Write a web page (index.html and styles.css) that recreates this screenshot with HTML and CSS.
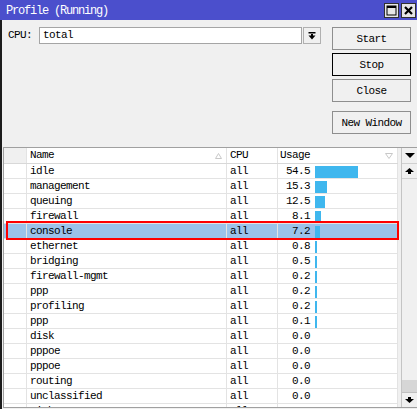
FILE: index.html
```html
<!DOCTYPE html>
<html>
<head>
<meta charset="utf-8">
<link rel="stylesheet" href="styles.css">
</head>
<body>
<div class="window">
  <div class="titlebar">
    <span class="title-text">Profile (Running)</span>
    <span class="tbtn"><svg width="13" height="13" viewBox="0 0 13 13"><rect x="2" y="2" width="9" height="9" fill="none" stroke="#000" stroke-width="1"/><rect x="2" y="2" width="9" height="2" fill="#000"/></svg></span>
    <span class="tbtn"><svg width="13" height="13" viewBox="0 0 13 13"><path d="M3 3 L10 10 M10 3 L3 10" stroke="#000" stroke-width="2.2"/></svg></span>
  </div>
  <div class="body">
    <div class="top">
      <div class="cpu">
        <span class="cpu-label">CPU:</span>
        <div class="cpu-input">total</div>
        <div class="dd"><svg width="8" height="8" viewBox="0 0 8 8"><rect x="0.5" y="0" width="7" height="1.5" fill="#000"/><rect x="3" y="2" width="2" height="2" fill="#000"/><polygon points="0.5,3.5 7.5,3.5 4,7.5" fill="#000"/></svg></div>
      </div>
      <div class="btns">
        <div class="btn">Start</div>
        <div class="btn default">Stop</div>
        <div class="btn">Close</div>
        <div class="btn spaced">New Window</div>
      </div>
    </div>
    <div class="table">
      <div class="grid">
        <div class="row head">
          <div class="c c0"></div>
          <div class="c name">Name<svg class="sort" width="7" height="6" viewBox="0 0 7 6"><polygon points="3.5,0.5 6.5,5.5 0.5,5.5" fill="none" stroke="#c8c8c8"/></svg></div>
          <div class="c cpuc">CPU</div>
          <div class="c usage">Usage<svg class="sort" width="8" height="6" viewBox="0 0 8 6"><polygon points="0.5,0.5 7.5,0.5 4,5.5" fill="none" stroke="#c8c8c8"/></svg></div>
        </div>
        <div class="row"><div class="c c0"></div><div class="c name">idle</div><div class="c cpuc">all</div><div class="c usage"><span class="val">54.5</span><span class="bar" style="width:43px"></span></div></div>
        <div class="row"><div class="c c0"></div><div class="c name">management</div><div class="c cpuc">all</div><div class="c usage"><span class="val">15.3</span><span class="bar" style="width:12px"></span></div></div>
        <div class="row"><div class="c c0"></div><div class="c name">queuing</div><div class="c cpuc">all</div><div class="c usage"><span class="val">12.5</span><span class="bar" style="width:10px"></span></div></div>
        <div class="row"><div class="c c0"></div><div class="c name">firewall</div><div class="c cpuc">all</div><div class="c usage"><span class="val">8.1</span><span class="bar" style="width:6px"></span></div></div>
        <div class="row sel"><div class="c c0"></div><div class="c name">console</div><div class="c cpuc">all</div><div class="c usage"><span class="val">7.2</span><span class="bar" style="width:5px"></span></div></div>
        <div class="row"><div class="c c0"></div><div class="c name">ethernet</div><div class="c cpuc">all</div><div class="c usage"><span class="val">0.8</span><span class="bar" style="width:2px"></span></div></div>
        <div class="row"><div class="c c0"></div><div class="c name">bridging</div><div class="c cpuc">all</div><div class="c usage"><span class="val">0.5</span><span class="bar" style="width:2px"></span></div></div>
        <div class="row"><div class="c c0"></div><div class="c name">firewall-mgmt</div><div class="c cpuc">all</div><div class="c usage"><span class="val">0.2</span><span class="bar" style="width:2px"></span></div></div>
        <div class="row"><div class="c c0"></div><div class="c name">ppp</div><div class="c cpuc">all</div><div class="c usage"><span class="val">0.2</span><span class="bar" style="width:2px"></span></div></div>
        <div class="row"><div class="c c0"></div><div class="c name">profiling</div><div class="c cpuc">all</div><div class="c usage"><span class="val">0.2</span><span class="bar" style="width:2px"></span></div></div>
        <div class="row"><div class="c c0"></div><div class="c name">ppp</div><div class="c cpuc">all</div><div class="c usage"><span class="val">0.1</span><span class="bar" style="width:2px"></span></div></div>
        <div class="row"><div class="c c0"></div><div class="c name">disk</div><div class="c cpuc">all</div><div class="c usage"><span class="val">0.0</span></div></div>
        <div class="row"><div class="c c0"></div><div class="c name">pppoe</div><div class="c cpuc">all</div><div class="c usage"><span class="val">0.0</span></div></div>
        <div class="row"><div class="c c0"></div><div class="c name">pppoe</div><div class="c cpuc">all</div><div class="c usage"><span class="val">0.0</span></div></div>
        <div class="row"><div class="c c0"></div><div class="c name">routing</div><div class="c cpuc">all</div><div class="c usage"><span class="val">0.0</span></div></div>
        <div class="row"><div class="c c0"></div><div class="c name">unclassified</div><div class="c cpuc">all</div><div class="c usage"><span class="val">0.0</span></div></div>
        <div class="row"><div class="c c0"></div><div class="c name">winbox</div><div class="c cpuc">all</div><div class="c usage"><span class="val">0.0</span></div></div>
      </div>
      <div class="sb">
        <div class="sb-in">
          <div class="sb-head"><svg width="10" height="5" viewBox="0 0 10 5"><polygon points="0,0 10,0 5,5" fill="#000"/></svg></div>
          <div class="sb-btn"><svg width="9" height="6" viewBox="0 0 9 6"><polygon points="4.5,0 9,4 0,4" fill="#000"/><rect x="3" y="4" width="3" height="2" fill="#000"/></svg></div>
          <div class="sb-track"><div class="sb-thumb"></div></div>
          <div class="sb-btn down"><svg width="9" height="6" viewBox="0 0 9 6"><rect x="3" y="0" width="3" height="2" fill="#000"/><polygon points="0,2 9,2 4.5,6" fill="#000"/></svg></div>
        </div>
      </div>
      <div class="selbox"></div>
    </div>
  </div>
</div>
</body>
</html>
```

FILE: styles.css
```css
html, body {
  margin: 0;
  padding: 0;
  background: #f0f0f0;
}
body {
  width: 417px;
  height: 409px;
  overflow: hidden;
  font-family: "Liberation Mono", "DejaVu Sans Mono", monospace;
  font-size: 11px;
  letter-spacing: -0.6px;
  color: #000;
}
.window {
  display: flex;
  flex-direction: column;
  height: 409px;
}
.titlebar {
  height: 20px;
  background: #4b4fcc;
  color: #fff;
  display: flex;
  align-items: center;
  padding: 1px 1px 0 6px;
  box-sizing: border-box;
}
.title-text {
  flex: 1;
  font-size: 12px;
  letter-spacing: -1.2px;
}
.tbtn {
  width: 15px;
  height: 15px;
  box-sizing: border-box;
  border: 1px solid #303030;
  background: #e6e6e6;
  margin-left: 2px;
  display: flex;
  align-items: center;
  justify-content: center;
}
.body {
  flex: 1;
  border-left: 2px solid #1c1c1c;
  display: flex;
  flex-direction: column;
}
.top {
  display: flex;
  height: 127px;
  box-sizing: border-box;
  padding: 7px 6px 0 6px;
}
.cpu {
  display: flex;
  align-items: flex-start;
  width: 313px;
}
.cpu-label {
  width: 31px;
  line-height: 17px;
}
.cpu-input {
  width: 263px;
  height: 17px;
  box-sizing: border-box;
  border: 1px solid #a5a5a5;
  background: #fff;
  padding-left: 3px;
  line-height: 15px;
}
.dd {
  width: 18px;
  height: 17px;
  margin-left: 1px;
  box-sizing: border-box;
  border: 1px solid #b0b0b0;
  background: #f0f0f0;
  display: flex;
  align-items: center;
  justify-content: center;
}
.btns {
  margin-left: 11px;
  width: 79px;
  display: flex;
  flex-direction: column;
  gap: 3px;
}
.btn {
  height: 23px;
  box-sizing: border-box;
  border: 1px solid #8e8e8e;
  background: #f0f0f0;
  display: flex;
  align-items: center;
  justify-content: center;
}
.btn.default {
  border-color: #000;
}
.btn.spaced {
  margin-top: 6px;
}
.table {
  position: relative;
  margin-left: 1px;
  height: 261px;
  box-sizing: border-box;
  border: 1px solid #a0a0a0;
  border-right: none;
  display: flex;
  background: #fff;
}
.grid {
  width: 394px;
  overflow: hidden;
}
.row {
  display: grid;
  grid-template-columns: 23px 200px 51px 120px;
  height: 15px;
  box-sizing: border-box;
  border-bottom: 1px solid #e3e3e3;
}
.c {
  border-right: 1px solid #e3e3e3;
  padding-left: 3px;
  line-height: 15px;
  white-space: nowrap;
  overflow: hidden;
  position: relative;
}
.c0 {
  padding-left: 0;
}
.head {
  height: 16px;
  border-bottom-color: #d8d8d8;
}
.head .c0 {
  background: #f0f0f0;
}
.sort {
  position: absolute;
  right: 4px;
  top: 5px;
}
.usage {
  display: flex;
  padding-left: 0;
}
.head .usage {
  padding-left: 2px;
}
.val {
  width: 32px;
  text-align: right;
  flex: none;
}
.bar {
  height: 12px;
  margin-top: 2px;
  margin-left: 5px;
  background: #3fb7ee;
  flex: none;
}
.sel {
  background: #9bc2ea;
}
.sb {
  width: 19px;
  padding-left: 3px;
  box-sizing: border-box;
  background: #f0f0f0;
  display: flex;
}
.sb-in {
  flex: 1;
  border-left: 1px solid #c4c4c4;
  display: flex;
  flex-direction: column;
}
.sb-head {
  height: 16px;
  box-sizing: border-box;
  border-bottom: 1px solid #d0d0d0;
  display: flex;
  align-items: center;
  justify-content: center;
}
.sb-btn {
  height: 15px;
  box-sizing: border-box;
  display: flex;
  align-items: center;
  justify-content: center;
  border-bottom: 1px solid #d0d0d0;
}
.sb-btn.down {
  border-bottom: none;
  border-top: 1px solid #c0c0c0;
}
.sb-track {
  flex: 1;
  display: flex;
  flex-direction: column;
  justify-content: flex-end;
}
.sb-thumb {
  height: 12px;
  background: #d6d6d6;
}
.selbox {
  position: absolute;
  left: 2px;
  top: 73px;
  width: 393px;
  height: 19px;
  box-sizing: border-box;
  border: 2px solid #f00;
}
```
